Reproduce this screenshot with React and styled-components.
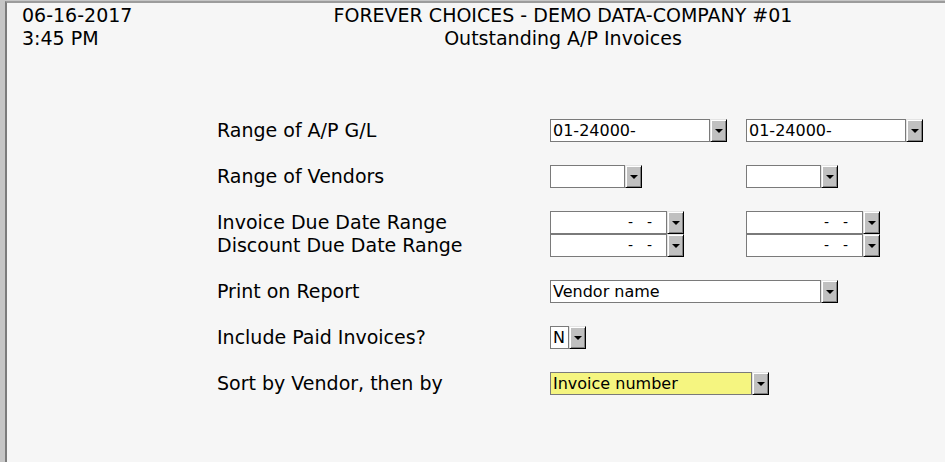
import React from 'react';
import styled, { createGlobalStyle } from 'styled-components';

const GlobalStyle = createGlobalStyle`
	html, body {
		margin: 0;
		padding: 0;
		background: #c6c6c6;
		font-family: 'DejaVu Sans', Verdana, sans-serif;
		color: #000;
	}
	* {
		box-sizing: border-box;
	}
`;

const groups = [
	{
		rows: [
			{
				label: 'Range of A/P G/L',
				fields: [
					{ width: 177, value: '01-24000-' },
					{ width: 177, value: '01-24000-' },
				],
			},
		],
	},
	{
		rows: [
			{
				label: 'Range of Vendors',
				fields: [{ width: 92 }, { width: 92 }],
			},
		],
	},
	{
		rows: [
			{
				label: 'Invoice Due Date Range',
				fields: [
					{ width: 134, date: true },
					{ width: 134, date: true },
				],
			},
			{
				label: 'Discount Due Date Range',
				fields: [
					{ width: 134, date: true },
					{ width: 134, date: true },
				],
			},
		],
	},
	{
		rows: [
			{
				label: 'Print on Report',
				fields: [{ width: 288, value: 'Vendor name' }],
			},
		],
	},
	{
		rows: [
			{
				label: 'Include Paid Invoices?',
				fields: [{ width: 36, value: 'N' }],
			},
		],
	},
	{
		rows: [
			{
				label: 'Sort by Vendor, then by',
				fields: [{ width: 219, value: 'Invoice number', highlight: true }],
			},
		],
	},
];

function Select({ width, value, date, highlight }) {
	return (
		<SelectWrap style={{ width }}>
			<Field $highlight={highlight} $date={date}>
				{date ? (
					<>
						<Dash>-</Dash>
						<Dash>-</Dash>
					</>
				) : (
					value
				)}
			</Field>
			<DropButton>
				<Arrow />
			</DropButton>
		</SelectWrap>
	);
}

export default function App() {
	return (
		<>
			<GlobalStyle />
			<Panel>
				<Header>
					<Stamp>
						<div>06-16-2017</div>
						<div>3:45 PM</div>
					</Stamp>
					<Title>
						<div>FOREVER CHOICES - DEMO DATA-COMPANY #01</div>
						<div>Outstanding A/P Invoices</div>
					</Title>
				</Header>
				<Form>
					{groups.map((group, gi) => (
						<Group key={gi}>
							{group.rows.map((row, ri) => (
								<Row key={ri}>
									<Label>{row.label}</Label>
									{row.fields.map((f, fi) => (
										<Cell key={fi} $span={row.fields.length === 1}>
											<Select {...f} />
										</Cell>
									))}
								</Row>
							))}
						</Group>
					))}
				</Form>
			</Panel>
		</>
	);
}

const Panel = styled.div`
	margin: 1px 0 0 5px;
	min-height: calc(100vh - 1px);
	background: #f6f6f6;
	border-top: 2px solid #9c9c9c;
	border-left: 2px solid #7c7c7c;
	padding-top: 1px;
`;

const Header = styled.div`
	display: flex;
	font-size: 19px;
	line-height: 23px;
`;

const Stamp = styled.div`
	width: 174px;
	padding-left: 15px;
`;

const Title = styled.div`
	flex: 1;
	text-align: center;
`;

const Form = styled.div`
	display: flex;
	flex-direction: column;
	gap: 23px;
	margin-top: 68px;
	padding-left: 210px;
`;

const Group = styled.div`
	display: flex;
	flex-direction: column;
`;

const Row = styled.div`
	display: grid;
	grid-template-columns: 333px 196px auto;
	height: 23px;
	align-items: center;
`;

const Label = styled.div`
	font-size: 19px;
	line-height: 23px;
	padding-top: 1px;
	white-space: nowrap;
`;

const Cell = styled.div`
	display: flex;
	grid-column: ${p => (p.$span ? 'span 2' : 'auto')};
`;

const SelectWrap = styled.div`
	display: inline-flex;
	flex-shrink: 0;
	height: 23px;
`;

const Field = styled.div`
	flex: 1;
	min-width: 0;
	height: 23px;
	border: 1px solid #7a7a7a;
	background: ${p => (p.$highlight ? '#f5f580' : '#fff')};
	font-size: 16px;
	line-height: 21px;
	padding-left: 2px;
	white-space: nowrap;
	overflow: hidden;
	display: flex;
	align-items: center;
	justify-content: ${p => (p.$date ? 'flex-end' : 'flex-start')};
	gap: ${p => (p.$date ? '14px' : '0')};
	padding-right: ${p => (p.$date ? '14px' : '0')};
`;

const Dash = styled.span`
	font-size: 14px;
	color: #000;
`;

const DropButton = styled.div`
	width: 17px;
	height: 23px;
	background: #c0c0c0;
	border: 1px solid;
	border-color: #e4e4e4 #000 #000 #e4e4e4;
	box-shadow: inset 1px 1px #fff, inset -1px -1px #808080;
	display: flex;
	align-items: center;
	justify-content: center;
	padding-top: 2px;
`;

const Arrow = styled.span`
	width: 0;
	height: 0;
	border-left: 4px solid transparent;
	border-right: 4px solid transparent;
	border-top: 4px solid #000;
`;
